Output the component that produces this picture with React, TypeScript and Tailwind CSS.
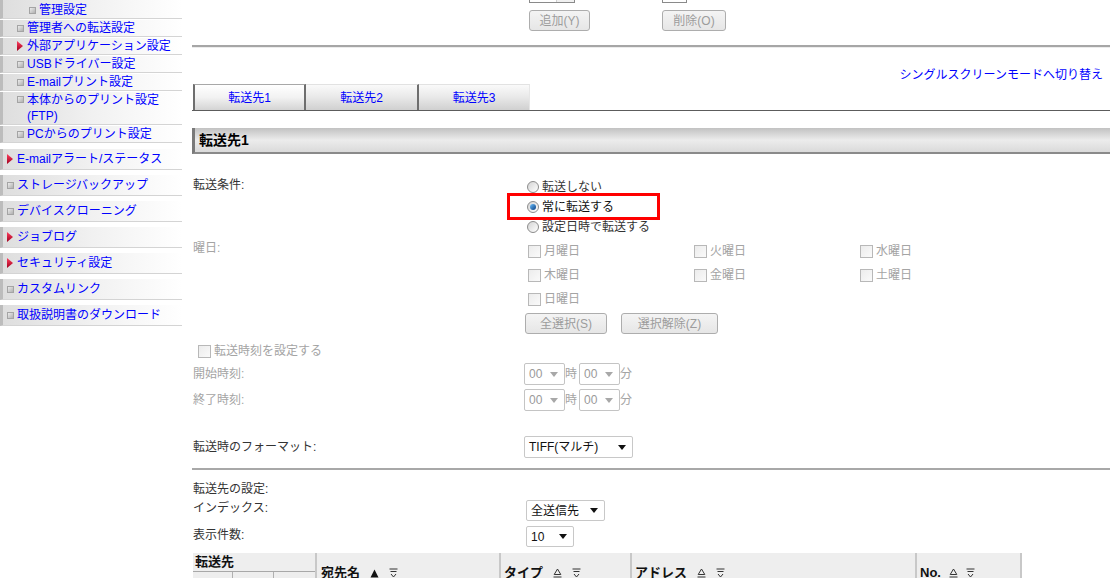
import React from "react";

function Sq() {
  return (
    <span className="inline-block w-[7px] h-[7px] shrink-0 border border-[#a4a4a4] bg-linear-to-br from-[#ececec] to-[#b0b0b0]" />
  );
}

function Tri() {
  return (
    <svg width="6" height="10" viewBox="0 0 6 10" className="shrink-0">
      <defs>
        <linearGradient id="rtg" x1="0" y1="0" x2="0" y2="1">
          <stop offset="0" stopColor="#ff4060" />
          <stop offset="1" stopColor="#a0001e" />
        </linearGradient>
      </defs>
      <polygon points="0,0 6,5 0,10" fill="url(#rtg)" />
    </svg>
  );
}

const rowBase =
  "flex border-l-[3px] border-l-[#bcbcbc] border-b border-b-[#d4d4d4] bg-linear-to-r from-[#dedede] via-[#f1f1f1] to-white text-[#0000ff] whitespace-nowrap";
const subRow = rowBase + " items-center h-[17px] mb-[1px]";
const topRow = rowBase + " items-center h-[21px] mb-[5px] pl-[4px] gap-[3px]";

function Sidebar() {
  return (
    <div className="w-[182px] shrink-0 text-[12px] leading-[16px]">
      <div className={rowBase + " items-center h-[19px] pt-[2px] mb-[1px] pl-[26px] gap-[3px]"}>
        <Sq />
        <span>管理設定</span>
      </div>
      <div className={subRow + " pl-[14px] gap-[3px]"}>
        <Sq />
        <span>管理者への転送設定</span>
      </div>
      <div className={subRow + " pl-[14px] gap-[4px]"}>
        <Tri />
        <span>外部アプリケーション設定</span>
      </div>
      <div className={subRow + " pl-[14px] gap-[3px]"}>
        <Sq />
        <span>USBドライバー設定</span>
      </div>
      <div className={subRow + " pl-[14px] gap-[3px]"}>
        <Sq />
        <span>E-mailプリント設定</span>
      </div>
      <div className={rowBase + " items-start h-[33px] mb-[1px] pl-[14px] gap-[3px]"}>
        <span className="mt-[4px] flex">
          <Sq />
        </span>
        <span>
          本体からのプリント設定
          <br />
          (FTP)
        </span>
      </div>
      <div className={subRow + " pl-[14px] gap-[3px]"}>
        <Sq />
        <span>PCからのプリント設定</span>
      </div>
      <div className="h-[5px]" />
      <div className={topRow}>
        <Tri />
        <span className="ml-[1px]">E-mailアラート/ステータス</span>
      </div>
      <div className={topRow}>
        <Sq />
        <span>ストレージバックアップ</span>
      </div>
      <div className={topRow}>
        <Sq />
        <span>デバイスクローニング</span>
      </div>
      <div className={topRow}>
        <Tri />
        <span className="ml-[1px]">ジョブログ</span>
      </div>
      <div className={topRow}>
        <Tri />
        <span className="ml-[1px]">セキュリティ設定</span>
      </div>
      <div className={topRow}>
        <Sq />
        <span>カスタムリンク</span>
      </div>
      <div className={topRow}>
        <Sq />
        <span>取扱説明書のダウンロード</span>
      </div>
    </div>
  );
}

function DisBtn({ children, w }: { children: React.ReactNode; w: string }) {
  return (
    <div
      className={
        "h-[21px] border border-[#adadad] rounded-[3px] bg-linear-to-b from-[#f4f4f4] to-[#e6e6e6] text-[#9c9c9c] flex items-center justify-center shrink-0 " +
        w
      }
    >
      {children}
    </div>
  );
}

function Radio({ checked }: { checked?: boolean }) {
  return (
    <span className="inline-flex w-[12px] h-[12px] rounded-full border border-[#8c8c8c] bg-linear-to-br from-[#d4d4d4] to-white items-center justify-center shrink-0">
      {checked && (
        <span className="w-[6px] h-[6px] rounded-full bg-linear-to-br from-[#6cc0ff] to-[#0a3f80]" />
      )}
    </span>
  );
}

function CB() {
  return (
    <span className="inline-block w-[13px] h-[13px] border border-[#b8b8b8] bg-linear-to-br from-[#ececec] to-[#fafafa] shrink-0" />
  );
}

function Caret({ color }: { color: string }) {
  return (
    <svg width="8" height="5" viewBox="0 0 8 5" className="shrink-0">
      <polygon points="0,0 8,0 4,5" fill={color} />
    </svg>
  );
}

function Sel({
  w,
  text,
  dis,
}: {
  w: string;
  text: string;
  dis?: boolean;
}) {
  return (
    <div
      className={
        "border rounded-[2px] bg-white flex items-center justify-between pl-[4px] pr-[6px] shrink-0 " +
        (dis ? "border-[#c4c4c4] text-[#9a9a9a] " : "border-[#c8c8c8] text-[#111] ") +
        w
      }
    >
      <span>{text}</span>
      <Caret color={dis ? "#a8a8a8" : "#111"} />
    </div>
  );
}

function SortOn() {
  return (
    <svg width="9" height="9" viewBox="0 0 9 9" className="shrink-0">
      <polygon points="4.5,0.5 8.5,8.5 0.5,8.5" fill="#111" />
    </svg>
  );
}
function SortOff() {
  return (
    <svg width="9" height="10" viewBox="0 0 9 10" className="shrink-0">
      <polygon points="4.5,1 7.8,6.5 1.2,6.5" fill="none" stroke="#333" strokeWidth="1" />
      <line x1="0.5" y1="9" x2="8.5" y2="9" stroke="#333" strokeWidth="1" />
    </svg>
  );
}
function Filt() {
  return (
    <svg width="9" height="10" viewBox="0 0 9 10" className="shrink-0">
      <line x1="0.5" y1="1" x2="8.5" y2="1" stroke="#333" strokeWidth="1" />
      <line x1="1.5" y1="3.5" x2="7.5" y2="3.5" stroke="#333" strokeWidth="1" />
      <polyline points="2,6 4.5,9 7,6" fill="none" stroke="#333" strokeWidth="1" />
    </svg>
  );
}

function Main() {
  const label = "w-[334px] shrink-0 text-[#333]";
  const dlabel = "w-[334px] shrink-0 text-[#a4a4a4]";
  return (
    <div className="w-[918px] shrink-0 text-[12px] leading-[16px]">
      {/* top area */}
      <div className="h-[45px] flex flex-col">
        <div className="flex h-[3px] pl-[337px]">
          <div className="w-[46px] h-[3px] border-l border-b border-r border-[#8a8a8a] flex justify-end">
            <div className="w-[18px] h-[2px] border-l border-[#cfcfcf] bg-[#f0f0f0]" />
          </div>
          <div className="w-[25px] h-[3px] ml-[87px] border-l border-b border-r border-[#8a8a8a]" />
        </div>
        <div className="flex pl-[337px] mt-[7px]">
          <DisBtn w="w-[61px]">追加(Y)</DisBtn>
          <div className="w-[72px]" />
          <DisBtn w="w-[64px]">削除(O)</DisBtn>
        </div>
      </div>
      <div className="h-[2px] bg-[#a6a6a6]" />
      <div className="h-[1px] bg-[#ececec]" />
      {/* link */}
      <div className="h-[36px] flex items-end justify-end pr-[7px] pb-[1px]">
        <span className="text-[#0000ff] whitespace-nowrap">シングルスクリーンモードへ切り替え</span>
      </div>
      {/* tabs */}
      <div className="h-[26px] flex pl-[1px]">
        <div className="w-[113px] h-[26px] border-l-2 border-l-[#6e6e6e] border-r-2 border-r-[#6e6e6e] border-t border-t-[#a8a8a8] bg-linear-to-b from-white via-[#f2f2f2] to-[#d4d4d4] flex items-center justify-center text-[#0000ff]">
          転送先1
        </div>
        <div className="w-[113px] h-[26px] border-r-2 border-r-[#6e6e6e] border-t border-t-[#e2e2e2] bg-linear-to-b from-[#fafafa] via-[#e8e8e8] to-[#d0d0d0] flex items-center justify-center text-[#0000ff]">
          転送先2
        </div>
        <div className="w-[111px] h-[26px] border-t border-t-[#e2e2e2] border-r border-r-[#e6e6e6] bg-linear-to-b from-[#fafafa] via-[#e8e8e8] to-[#d0d0d0] flex items-center justify-center text-[#0000ff]">
          転送先3
        </div>
      </div>
      <div className="h-[1px] bg-[#5c5c5c]" />
      {/* section header */}
      <div className="mt-[17px] h-[26px] border-l-[3px] border-l-[#7a7a7a] border-b-2 border-b-[#8a8a8a] bg-linear-to-b from-[#c2c2c2] via-[#ececec] to-[#dadada] flex items-center pl-[4px]">
        <span className="text-[14px] font-bold text-black">転送先1</span>
      </div>

      {/* form */}
      <div className="mt-[23px] flex pl-[1px]">
        <div className={label}>転送条件:</div>
        <div className="flex flex-col">
          <div className="h-[20px] flex items-center gap-[3px] text-[#333]">
            <Radio />
            <span>転送しない</span>
          </div>
          <div className="relative h-[20px] flex items-center gap-[3px] text-[#111]">
            <Radio checked />
            <span>常に転送する</span>
            <div className="absolute left-[-20px] top-[-4px] w-[153px] h-[27px] border-[3px] border-[#ff0000]" />
          </div>
          <div className="h-[20px] flex items-center gap-[3px] text-[#333]">
            <Radio />
            <span>設定日時で転送する</span>
          </div>
        </div>
      </div>

      <div className="mt-[2px] flex pl-[1px]">
        <div className={dlabel + " mt-[1px]"}>曜日:</div>
        <div className="flex flex-col">
          <div className="grid grid-cols-[166px_166px_166px] text-[#a4a4a4]">
            {["月曜日", "火曜日", "水曜日", "木曜日", "金曜日", "土曜日", "日曜日"].map((d) => (
              <div key={d} className="h-[24px] flex items-center gap-[3px] pl-[1px]">
                <CB />
                <span>{d}</span>
              </div>
            ))}
          </div>
          <div className="flex mt-[2px] ml-[-2px] gap-[14px]">
            <DisBtn w="w-[82px]">全選択(S)</DisBtn>
            <DisBtn w="w-[97px]">選択解除(Z)</DisBtn>
          </div>
        </div>
      </div>

      <div className="mt-[7px] h-[20px] flex items-center gap-[3px] pl-[6px] text-[#a4a4a4]">
        <CB />
        <span>転送時刻を設定する</span>
      </div>

      <div className="mt-[2px] h-[22px] flex items-center pl-[1px]">
        <div className={dlabel}>開始時刻:</div>
        <div className="flex items-center ml-[-3px] text-[#a4a4a4]">
          <Sel w="w-[41px] h-[22px]" text="00" dis />
          <span className="w-[14px]">時</span>
          <Sel w="w-[41px] h-[22px]" text="00" dis />
          <span>分</span>
        </div>
      </div>
      <div className="mt-[4px] h-[22px] flex items-center pl-[1px]">
        <div className={dlabel}>終了時刻:</div>
        <div className="flex items-center ml-[-3px] text-[#a4a4a4]">
          <Sel w="w-[41px] h-[22px]" text="00" dis />
          <span className="w-[14px]">時</span>
          <Sel w="w-[41px] h-[22px]" text="00" dis />
          <span>分</span>
        </div>
      </div>

      <div className="mt-[25px] h-[22px] flex items-center pl-[1px]">
        <div className={label}>転送時のフォーマット:</div>
        <div className="ml-[-3px]">
          <Sel w="w-[109px] h-[22px]" text="TIFF(マルチ)" />
        </div>
      </div>

      <div className="mt-[10px] h-[2px] bg-[#a8a8a8]" />

      <div className="mt-[11px] pl-[1px] text-[#333]">転送先の設定:</div>
      <div className="mt-[3px] flex items-start pl-[1px]">
        <div className={label}>インデックス:</div>
        <div className="ml-[-1px]">
          <Sel w="w-[79px] h-[21px]" text="全送信先" />
        </div>
      </div>
      <div className="mt-[5px] flex items-start pl-[1px]">
        <div className={label + " mt-[1px]"}>表示件数:</div>
        <div className="ml-[-1px]">
          <Sel w="w-[48px] h-[21px]" text="10" />
        </div>
      </div>

      {/* table header */}
      <div className="mt-[6px] flex pl-[1px] h-[38px] text-[13px] font-bold text-[#111]">
        <div className="w-[122px] flex flex-col bg-[#eeeeee]">
          <div className="h-[19px] border-b border-b-[#a8a8a8] flex items-center pl-[2px]">転送先</div>
          <div className="flex flex-1">
            <div className="w-[40px] border-r border-r-[#b0b0b0]" />
            <div className="w-[41px] border-r border-r-[#b0b0b0]" />
            <div className="flex-1" />
          </div>
        </div>
        <div className="w-[2px] bg-[#c8c8c8]" />
        <div className="w-[182px] bg-[#eeeeee] flex items-center pl-[4px] pt-[2px] gap-[10px]">
          <span>宛先名</span>
          <SortOn />
          <Filt />
        </div>
        <div className="w-[2px] bg-[#c8c8c8]" />
        <div className="w-[129px] bg-[#eeeeee] flex items-center pl-[3px] pt-[2px] gap-[10px]">
          <span>タイプ</span>
          <SortOff />
          <Filt />
        </div>
        <div className="w-[2px] bg-[#c8c8c8]" />
        <div className="w-[283px] bg-[#eeeeee] flex items-center pl-[3px] pt-[2px] gap-[10px]">
          <span>アドレス</span>
          <SortOff />
          <Filt />
        </div>
        <div className="w-[2px] bg-[#c8c8c8]" />
        <div className="w-[103px] bg-[#eeeeee] flex items-center pl-[3px] pt-[2px] gap-[8px]">
          <span>No.</span>
          <SortOff />
          <Filt />
        </div>
        <div className="w-[2px] bg-[#c8c8c8]" />
      </div>
    </div>
  );
}

export default function App() {
  return (
    <div className="w-[1110px] h-[578px] overflow-hidden bg-white flex items-start gap-[10px] font-['Liberation_Sans','Noto_Sans_CJK_JP',sans-serif]">
      <Sidebar />
      <Main />
    </div>
  );
}
